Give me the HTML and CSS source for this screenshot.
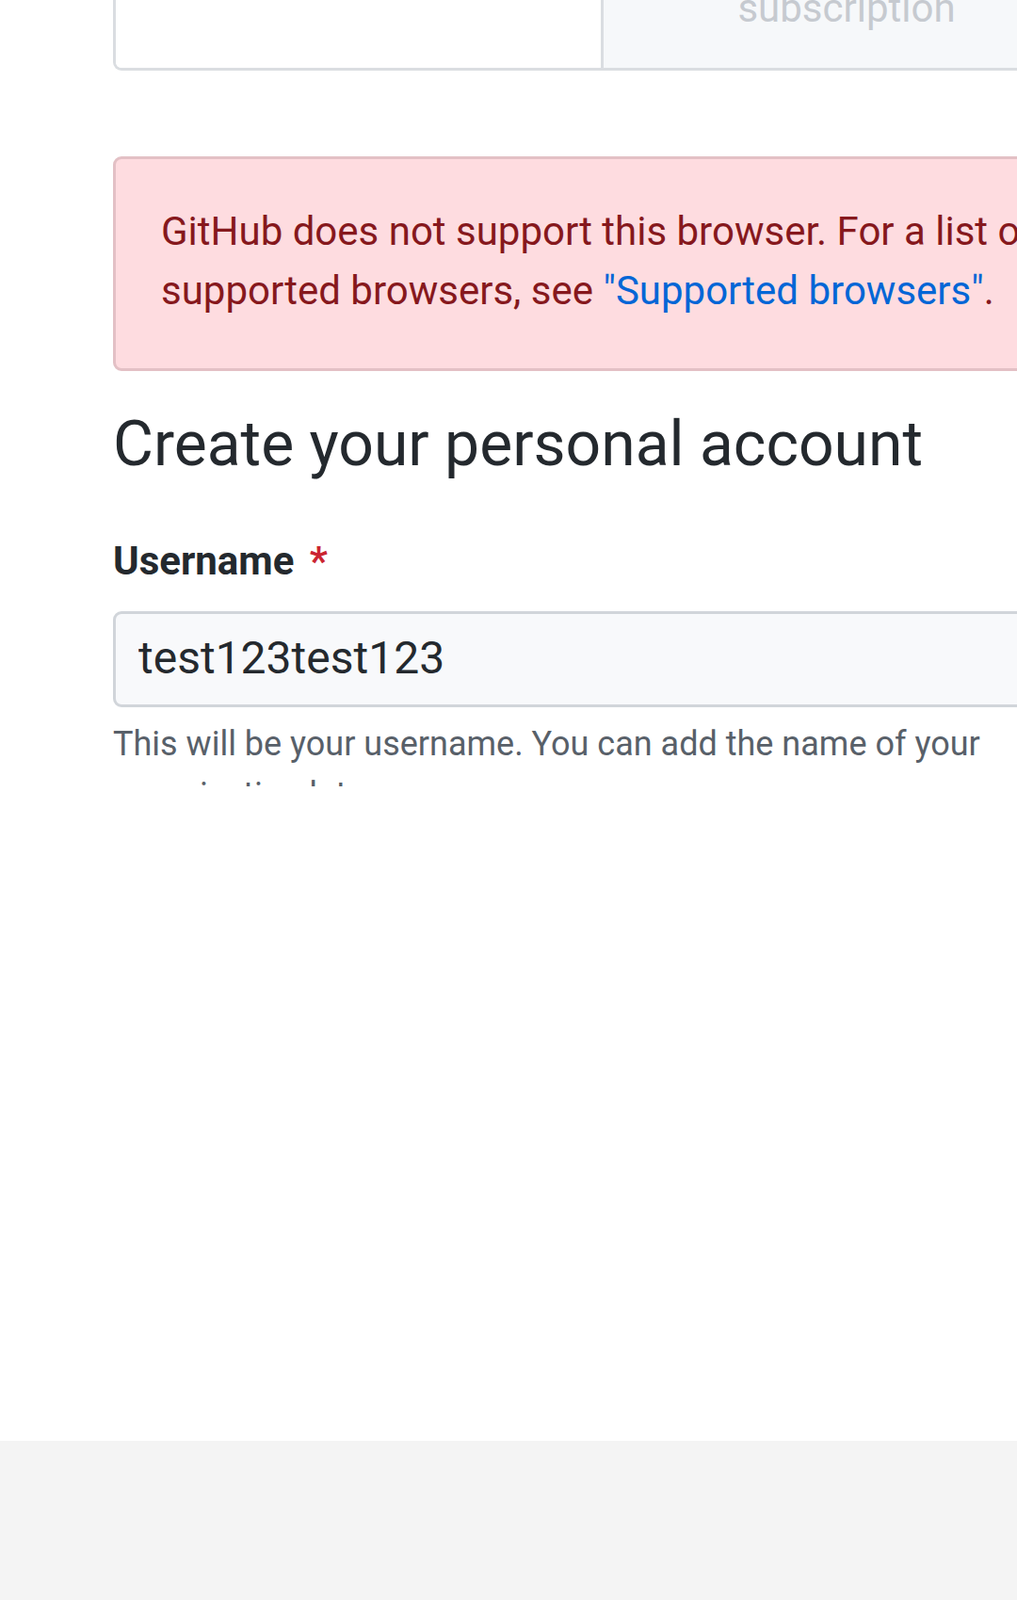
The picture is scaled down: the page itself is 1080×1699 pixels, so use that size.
FILE: index.html
```html
<!DOCTYPE html>
<html lang="en">
<head>
<meta charset="utf-8">
<title>Create your personal account</title>
<link rel="stylesheet" href="styles.css">
</head>
<body>
  <div class="viewport">
    <main class="page">
      <div class="plan-box">
        <div class="plan-cell plan-free"></div>
        <div class="plan-cell plan-pro"><span>subscription</span></div>
      </div>

      <div class="flash">
        GitHub does not support this browser. For a list of supported browsers, see <a href="#">"Supported browsers"</a>.
      </div>

      <h1 class="title">Create your personal account</h1>

      <div class="field">
        <label class="label" for="username">Username <span class="req">*</span></label>
        <input class="input" id="username" type="text" value="test123test123">
        <p class="note">This will be your username. You can add the name of your organization later.</p>
      </div>
    </main>
  </div>
  <div class="bottom-bar"></div>
</body>
</html>
```

FILE: styles.css
```css
* { box-sizing: border-box; }

html, body {
  margin: 0;
  padding: 0;
  background: #ffffff;
  overflow: hidden;
}

body {
  width: 1080px;
  height: 1699px;
  font-family: Roboto, "Noto Sans", Arial, sans-serif;
  color: #24292e;
}

.viewport {
  width: 1080px;
  height: 1530px;
  overflow: hidden;
  background: #ffffff;
}

.page {
  width: 1160px;
  height: 835px;
  padding-left: 120px;
  overflow: hidden;
}

.plan-box {
  width: 1040px;
  height: 75px;
  display: grid;
  grid-template-columns: 515px 1fr;
  grid-template-rows: 72px;
  border: 3px solid #dadde1;
  border-top: 0;
  border-radius: 0 0 9px 9px;
  overflow: hidden;
}

.plan-cell {
  background: #ffffff;
  min-height: 0;
  overflow: hidden;
}

.plan-pro {
  background: #f6f8fa;
  border-left: 3px solid #dadde1;
  display: flex;
  align-items: flex-end;
  justify-content: center;
  padding-bottom: 32px;
  font-size: 42px;
  line-height: 63px;
  color: #c6cad0;
}

.plan-pro span {
  flex: none;
}

.flash {
  width: 1040px;
  margin-top: 91px;
  padding: 45px 48px 51px;
  border: 3px solid #e3c0c5;
  border-radius: 9px;
  background: #fedce0;
  color: #86181d;
  font-size: 42px;
  line-height: 63px;
}

.flash a {
  color: #0366d6;
  text-decoration: none;
}

.title {
  margin: 36px 0 0;
  font-size: 66px;
  line-height: 84px;
  font-weight: 400;
  color: #24292e;
}

.field {
  width: 1040px;
  margin-top: 50px;
}

.label {
  display: block;
  font-size: 42px;
  line-height: 63px;
  font-weight: 700;
  color: #24292e;
}

.req {
  color: #cb2431;
  margin-left: 6px;
}

.input {
  display: block;
  width: 1040px;
  height: 102px;
  margin-top: 22px;
  padding: 0 24px 4px;
  border: 3px solid #d1d5da;
  border-radius: 9px;
  background: #f8f9fb;
  font-family: Roboto, "Noto Sans", Arial, sans-serif;
  font-size: 48px;
  color: #24292e;
  outline: none;
}

.note {
  margin: 12px 0 0;
  font-size: 36px;
  line-height: 54px;
  color: #586069;
}

.bottom-bar {
  height: 169px;
  background: #f4f4f4;
}
```
